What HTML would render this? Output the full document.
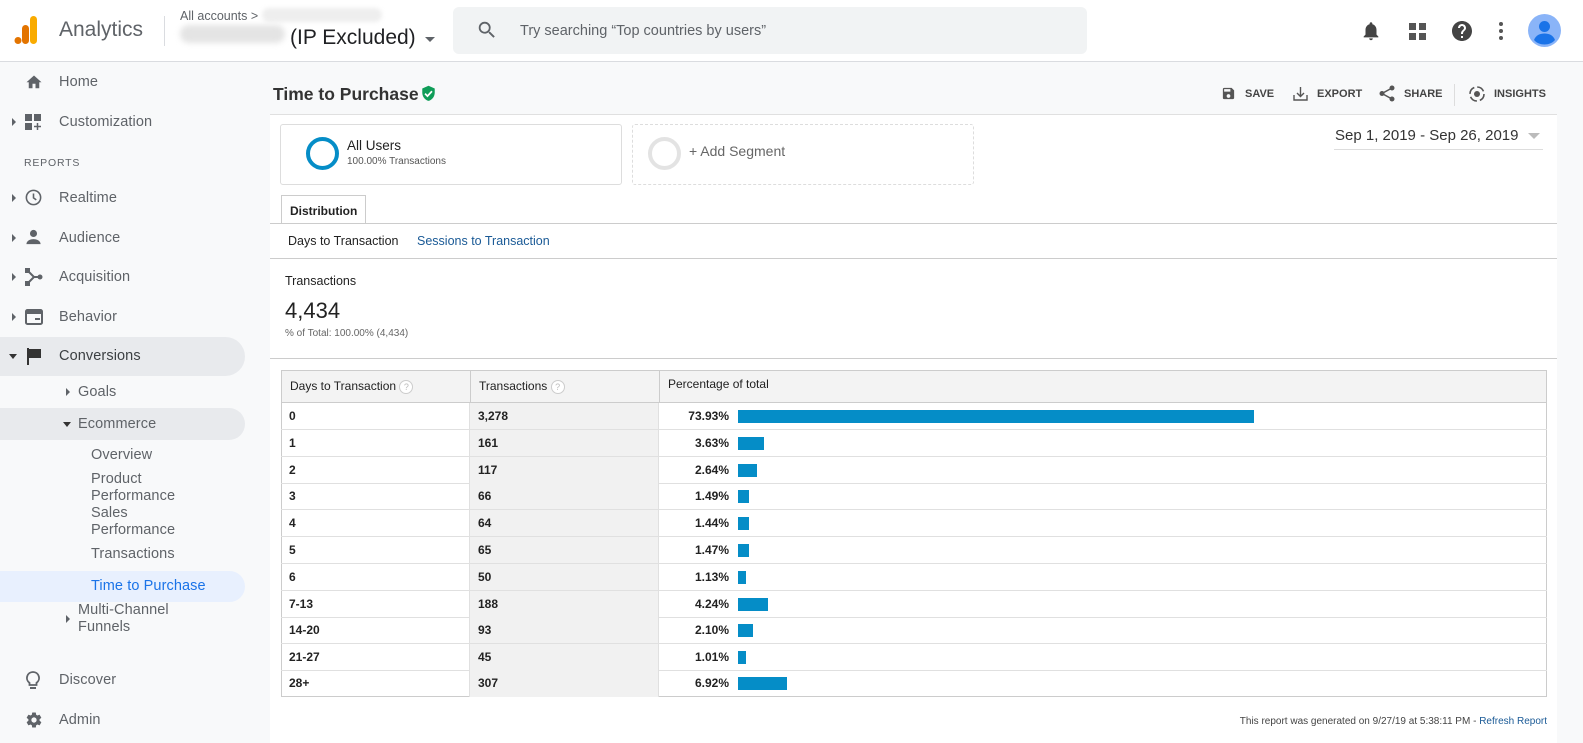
<!DOCTYPE html>
<html><head><meta charset="utf-8">
<style>
*{box-sizing:border-box;margin:0;padding:0}
body{width:1583px;height:743px;overflow:hidden;font-family:"Liberation Sans",Arial,sans-serif;background:#f8f9fa;position:relative;color:#222}
.a{position:absolute}
.top{left:0;top:0;width:1583px;height:62px;background:#fff;border-bottom:1px solid #dadce0}
.nav{font-size:14.5px;color:#5f6368;letter-spacing:.1px}
.tri{position:absolute;width:0;height:0;border-top:4px solid transparent;border-bottom:4px solid transparent;border-left:4px solid #5f6368}
.trid{position:absolute;width:0;height:0;border-left:4.5px solid transparent;border-right:4.5px solid transparent;border-top:5px solid #333}
.panel{left:270px;top:114px;width:1287px;height:629px;background:#fff}
.row{position:absolute;left:281px;width:1266px;height:27px;border-bottom:1px solid #e0e0e0;font-size:12px;font-weight:bold;color:#222}
.row div{position:absolute;top:0;height:100%;line-height:26px}
.c1{left:0;width:189px;padding-left:8px;border-right:1px solid #e0e0e0}
.c2{left:189px;width:189px;padding-left:8px;background:#f1f1f1;border-right:1px solid #e0e0e0}
.c3{left:378px;width:70px;text-align:right}
.bar{position:absolute;left:457px;top:7px!important;height:13px!important;background:#058dc7}
.ic{fill:#5f6368}
.q{display:inline-block;width:14px;height:14px;border:1px solid #ccc;border-radius:50%;font-size:9px;color:#bbb;text-align:center;line-height:12px;vertical-align:middle;background:#fff}
</style></head><body>
<div class="a top"></div>
<svg class="a" style="left:14px;top:15px" width="26" height="30" viewBox="0 0 26 30"><rect x="16" y="1" width="7" height="28" rx="3.5" fill="#f9ab00"/><rect x="8" y="10" width="7" height="19" rx="3.5" fill="#e37400"/><circle cx="4" cy="25.5" r="3.5" fill="#e37400"/></svg>
<div class="a" style="left:59px;top:18px;font-size:21px;color:#5f6368">Analytics</div>
<div class="a" style="left:164px;top:16px;width:1px;height:30px;background:#dadce0"></div>
<div class="a" style="left:180px;top:9px;font-size:12.5px;color:#5f6368">All accounts &gt;</div>
<div class="a" style="left:262px;top:8px;width:120px;height:14px;background:#eee;border-radius:7px;filter:blur(2px)"></div>
<div class="a" style="left:180px;top:25px;width:105px;height:18px;background:#e4e4e4;border-radius:9px;filter:blur(3px)"></div>
<div class="a" style="left:290px;top:26px;font-size:21px;color:#202124">(IP Excluded)</div>
<div class="a" style="left:425px;top:37px;width:0;height:0;border-left:5px solid transparent;border-right:5px solid transparent;border-top:5px solid #5f6368"></div>
<div class="a" style="left:453px;top:7px;width:634px;height:47px;background:#f1f3f4;border-radius:6px"></div>
<svg class="a" style="left:476px;top:19px" width="22" height="22" viewBox="0 0 24 24"><path fill="#5f6368" d="M15.5 14h-.79l-.28-.27A6.47 6.47 0 0016 9.5 6.5 6.5 0 109.5 16c1.61 0 3.090-.59 4.23-1.57l.27.28v.79l5 4.99L20.49 19l-4.99-5zm-6 0C7.01 14 5 11.990 5 9.5S7.01 5 9.5 5 14 7.01 14 9.5 11.99 14 9.5 14z"/></svg>
<div class="a" style="left:520px;top:23px;font-size:14.5px;color:#5f6368">Try searching “Top countries by users”</div>
<svg class="a" style="left:1360px;top:20px" width="22" height="22" viewBox="0 0 24 24"><path fill="#444" d="M12 22c1.1 0 2-.9 2-2h-4c0 1.1.9 2 2 2zm6-6v-5c0-3.07-1.64-5.64-4.5-6.32V4c0-.83-.67-1.5-1.5-1.5s-1.5.67-1.5 1.5v.68C7.63 5.36 6 7.92 6 11v5l-2 2v1h16v-1l-2-2z"/></svg>
<svg class="a" style="left:1409px;top:23px" width="17" height="17" viewBox="0 0 17 17"><rect x="0" y="0" width="7" height="7" fill="#555"/><rect x="10" y="0" width="7" height="7" fill="#555"/><rect x="0" y="10" width="7" height="7" fill="#555"/><rect x="10" y="10" width="7" height="7" fill="#555"/></svg>
<svg class="a" style="left:1450px;top:19px" width="24" height="24" viewBox="0 0 24 24"><path fill="#444" d="M12 2C6.48 2 2 6.48 2 12s4.48 10 10 10 10-4.48 10-10S17.52 2 12 2zm1 17h-2v-2h2v2zm2.07-7.75l-.9.92C13.45 12.9 13 13.5 13 15h-2v-.5c0-1.1.45-2.1 1.17-2.83l1.24-1.26c.37-.36.59-.86.59-1.41 0-1.1-.9-2-2-2s-2 .9-2 2H8c0-2.21 1.79-4 4-4s4 1.79 4 4c0 .88-.36 1.68-.93 2.25z"/></svg>
<svg class="a" style="left:1497px;top:21px" width="8" height="20" viewBox="0 0 8 20"><circle cx="4" cy="3" r="2" fill="#555"/><circle cx="4" cy="10" r="2" fill="#555"/><circle cx="4" cy="17" r="2" fill="#555"/></svg>
<svg class="a" style="left:1528px;top:14px" width="33" height="33" viewBox="0 0 33 33"><circle cx="16.5" cy="16.5" r="16.5" fill="#8ab4f8"/><circle cx="16.5" cy="12.5" r="5.5" fill="#1a73e8"/><path d="M6 26c2-5 6-6.5 10.5-6.5S25 21 27 26c-2.5 3-6.5 4.5-10.5 4.5S8.5 29 6 26z" fill="#1a73e8"/></svg>

<svg class="a" style="left:25px;top:73px" width="18" height="17" viewBox="0 0 24 22"><path class="ic" d="M10 20v-6h4v6h5v-8h3L12 3 2 12h3v8z"/></svg>
<div class="a nav" style="left:59px;top:74px">Home</div>
<div class="tri" style="left:12px;top:118px"></div>
<svg class="a" style="left:25px;top:114px" width="16" height="16" viewBox="0 0 16 16"><rect x="0" y="0" width="7" height="7" class="ic"/><rect x="9" y="0" width="7" height="7" class="ic"/><rect x="0" y="9" width="7" height="7" class="ic"/><path d="M12.5 9v7M9 12.5h7" stroke="#5f6368" stroke-width="1.5"/></svg>
<div class="a nav" style="left:59px;top:114px">Customization</div>
<div class="a" style="left:24px;top:157px;font-size:10.5px;color:#5f6368;letter-spacing:.8px">REPORTS</div>
<div class="tri" style="left:12px;top:194px"></div>
<svg class="a" style="left:24px;top:188px" width="19" height="19" viewBox="0 0 24 24"><circle cx="12" cy="12" r="9" fill="none" stroke="#5f6368" stroke-width="2"/><path d="M12 7v5.5l3.5 2.5" fill="none" stroke="#5f6368" stroke-width="2"/></svg>
<div class="a nav" style="left:59px;top:190px">Realtime</div>
<div class="tri" style="left:12px;top:234px"></div>
<svg class="a" style="left:25px;top:229px" width="17" height="16" viewBox="0 0 24 22"><circle cx="12" cy="6" r="5" class="ic"/><path class="ic" d="M2 21c0-5 6-7 10-7s10 2 10 7z"/></svg>
<div class="a nav" style="left:59px;top:230px">Audience</div>
<div class="tri" style="left:12px;top:273px"></div>
<svg class="a" style="left:25px;top:268px" width="18" height="18" viewBox="0 0 18 18"><rect x="0" y="0" width="5" height="5" class="ic"/><rect x="0" y="13" width="5" height="5" class="ic"/><circle cx="15" cy="9" r="2.5" class="ic"/><path d="M3 3l6 6-6 6M9 9h5" fill="none" stroke="#5f6368" stroke-width="2"/></svg>
<div class="a nav" style="left:59px;top:269px">Acquisition</div>
<div class="tri" style="left:12px;top:313px"></div>
<svg class="a" style="left:25px;top:309px" width="18" height="16" viewBox="0 0 18 16"><rect x="1" y="1" width="16" height="14" rx="1.5" fill="none" stroke="#5f6368" stroke-width="2"/><rect x="1" y="1" width="16" height="4" class="ic"/><path d="M10 10h5" stroke="#5f6368" stroke-width="2"/></svg>
<div class="a nav" style="left:59px;top:309px">Behavior</div>
<div class="a" style="left:0;top:337px;width:245px;height:39px;background:#e8eaed;border-radius:0 20px 20px 0"></div>
<div class="trid" style="left:9px;top:354px"></div>
<svg class="a" style="left:27px;top:348px" width="15" height="17" viewBox="0 0 15 17"><rect x="0" y="0" width="2" height="17" fill="#333"/><path d="M2 1h12v9H2z" fill="#333"/></svg>
<div class="a nav" style="left:59px;top:348px;color:#3c4043">Conversions</div>
<div class="tri" style="left:66px;top:388px"></div>
<div class="a nav" style="left:78px;top:384px">Goals</div>
<div class="a" style="left:0;top:408px;width:245px;height:32px;background:#e8eaed;border-radius:0 16px 16px 0"></div>
<div class="trid" style="left:63px;top:422px"></div>
<div class="a nav" style="left:78px;top:416px">Ecommerce</div>
<div class="a nav" style="left:91px;top:447px">Overview</div>
<div class="a nav" style="left:91px;top:471px;line-height:17px">Product<br>Performance<br>Sales<br>Performance</div>
<div class="a nav" style="left:91px;top:546px">Transactions</div>
<div class="a" style="left:0;top:571px;width:245px;height:31px;background:#e8f0fe;border-radius:0 16px 16px 0"></div>
<div class="a nav" style="left:91px;top:578px;color:#1a73e8">Time to Purchase</div>
<div class="tri" style="left:66px;top:615px"></div>
<div class="a nav" style="left:78px;top:602px;line-height:17px">Multi-Channel<br>Funnels</div>
<svg class="a" style="left:26px;top:671px" width="14" height="19" viewBox="0 0 14 19"><path d="M7 1a6 6 0 00-3.5 10.9V14h7v-2.1A6 6 0 007 1z" fill="none" stroke="#5f6368" stroke-width="1.8"/><rect x="4" y="16" width="6" height="2" class="ic"/></svg>
<div class="a nav" style="left:59px;top:672px">Discover</div>
<svg class="a" style="left:25px;top:711px" width="18" height="18" viewBox="0 0 24 24"><path class="ic" d="M19.4 13c.04-.32.06-.66.06-1s-.02-.68-.06-1l2.1-1.65c.2-.15.25-.42.12-.64l-2-3.46c-.12-.22-.39-.3-.61-.22l-2.490 1c-.52-.4-1.08-.73-1.69-.98l-.38-2.65A.49.49 0 0014 2h-4c-.25 0-.46.18-.49.42l-.38 2.65c-.61.25-1.17.59-1.69.98l-2.49-1a.5.5 0 00-.61.22l-2 3.46c-.13.22-.07.49.12.64L4.57 11c-.04.32-.07.66-.07 1s.03.68.07 1l-2.11 1.65c-.19.15-.24.42-.12.64l2 3.46c.12.22.39.3.61.22l2.49-1c.52.4 1.08.73 1.69.98l.38 2.65c.03.24.24.42.49.42h4c.25 0 .46-.18.49-.42l.38-2.65c.61-.25 1.17-.59 1.69-.98l2.49 1c.23.09.49 0 .61-.22l2-3.46c.12-.22.07-.49-.12-.64L19.4 13zM12 15.5c-1.93 0-3.5-1.57-3.5-3.5s1.57-3.5 3.5-3.5 3.5 1.57 3.5 3.5-1.57 3.5-3.5 3.5z"/></svg>
<div class="a nav" style="left:59px;top:712px">Admin</div>

<div class="a" style="left:273px;top:84px;font-size:17.5px;font-weight:bold;color:#333">Time to Purchase</div>
<svg class="a" style="left:420px;top:85px" width="17" height="18" viewBox="0 0 24 26"><path d="M12 1L3 5v6c0 5.5 3.8 10.7 9 12 5.2-1.3 9-6.5 9-12V5z" fill="#0f9d58"/><path d="M7 12.5l3.5 3.5 6.5-7" fill="none" stroke="#fff" stroke-width="2.5"/></svg>
<svg class="a" style="left:1221px;top:86px" width="15" height="15" viewBox="0 0 24 24"><path fill="#555" d="M17 3H5a2 2 0 00-2 2v14a2 2 0 002 2h14c1.1 0 2-.9 2-2V7l-4-4zm-5 16c-1.66 0-3-1.34-3-3s1.34-3 3-3 3 1.34 3 3-1.34 3-3 3zm3-10H5V5h10v4z"/></svg>
<div class="a" style="left:1245px;top:88px;font-size:11px;font-weight:bold;color:#444">SAVE</div>
<svg class="a" style="left:1293px;top:86px" width="15" height="15" viewBox="0 0 15 15"><path d="M1 9v5h13V9M7.5 1v9M4 7l3.5 3.5L11 7" fill="none" stroke="#555" stroke-width="1.4"/></svg>
<div class="a" style="left:1317px;top:88px;font-size:11px;font-weight:bold;color:#444">EXPORT</div>
<svg class="a" style="left:1379px;top:85px" width="16" height="17" viewBox="0 0 16 17"><circle cx="13" cy="3" r="2.5" fill="#555"/><circle cx="3" cy="8.5" r="2.5" fill="#555"/><circle cx="13" cy="14" r="2.5" fill="#555"/><path d="M13 3L3 8.5 13 14" fill="none" stroke="#555" stroke-width="1.5"/></svg>
<div class="a" style="left:1404px;top:88px;font-size:11px;font-weight:bold;color:#444">SHARE</div>
<div class="a" style="left:1454px;top:84px;width:1px;height:22px;background:#ddd"></div>
<svg class="a" style="left:1468px;top:85px" width="18" height="18" viewBox="0 0 18 18"><circle cx="9" cy="9" r="7" fill="none" stroke="#555" stroke-width="1.6" stroke-dasharray="8 3"/><circle cx="9" cy="9" r="3" fill="#555"/></svg>
<div class="a" style="left:1494px;top:88px;font-size:11px;font-weight:bold;color:#444">INSIGHTS</div>

<div class="a panel"></div>
<div class="a" style="left:270px;top:114px;width:1287px;height:1px;background:#e0e0e0"></div>
<div class="a" style="left:280px;top:124px;width:342px;height:61px;border:1px solid #ddd;border-radius:3px"></div>
<div class="a" style="left:306px;top:137px;width:33px;height:33px;border:4px solid #058dc7;border-radius:50%"></div>
<div class="a" style="left:347px;top:138px;font-size:13.5px;color:#222">All Users</div>
<div class="a" style="left:347px;top:156px;font-size:10px;color:#555">100.00% Transactions</div>
<div class="a" style="left:632px;top:124px;width:342px;height:61px;border:1px dashed #ddd;border-radius:3px"></div>
<div class="a" style="left:648px;top:137px;width:33px;height:33px;border:4px solid #e3e3e3;border-radius:50%"></div>
<div class="a" style="left:689px;top:143px;font-size:14px;color:#666">+ Add Segment</div>
<div class="a" style="left:1335px;top:127px;font-size:15px;color:#333">Sep 1, 2019 - Sep 26, 2019</div>
<div class="a" style="left:1528px;top:133px;width:0;height:0;border-left:6px solid transparent;border-right:6px solid transparent;border-top:6px solid #bbb"></div>
<div class="a" style="left:1334px;top:149px;width:209px;height:1px;background:#ddd"></div>
<div class="a" style="left:281px;top:195px;width:85px;height:29px;border:1px solid #ccc;border-bottom:none;background:#fff;font-size:12px;font-weight:bold;padding:8px 0 0 8px">Distribution</div>
<div class="a" style="left:270px;top:223px;width:1287px;height:1px;background:#ccc"></div>
<div class="a" style="left:288px;top:234px;font-size:12.5px;color:#222">Days to Transaction</div>
<div class="a" style="left:417px;top:234px;font-size:12.5px;color:#1a5a96">Sessions to Transaction</div>
<div class="a" style="left:270px;top:258px;width:1287px;height:1px;background:#ccc"></div>
<div class="a" style="left:285px;top:274px;font-size:12.5px;color:#222">Transactions</div>
<div class="a" style="left:285px;top:298px;font-size:22px;color:#222">4,434</div>
<div class="a" style="left:285px;top:328px;font-size:10px;color:#666">% of Total: 100.00% (4,434)</div>
<div class="a" style="left:270px;top:358px;width:1287px;height:1px;background:#ccc"></div>
<div class="a" style="left:281px;top:370px;width:1266px;height:327px;border:1px solid #ccc"></div>
<div class="row" style="top:370px;height:33px;background:#f3f3f3;font-weight:normal;border:1px solid #ccc">
 <div class="c1" style="line-height:31px;background:#f3f3f3;font-size:12px;border-right:1px solid #ccc">Days to Transaction <span class="q">?</span></div>
 <div class="c2" style="line-height:31px;background:#f3f3f3;font-size:12px;border-right:1px solid #ccc">Transactions <span class="q">?</span></div>
 <div style="left:386px;line-height:26px;font-size:12px">Percentage of total</div>
</div>
<div class="row" style="top:403px"><div class="c1">0</div><div class="c2">3,278</div><div class="c3">73.93%</div><div class="bar" style="width:516px"></div></div>
<div class="row" style="top:430px"><div class="c1">1</div><div class="c2">161</div><div class="c3">3.63%</div><div class="bar" style="width:26px"></div></div>
<div class="row" style="top:457px"><div class="c1">2</div><div class="c2">117</div><div class="c3">2.64%</div><div class="bar" style="width:19px"></div></div>
<div class="row" style="top:483px"><div class="c1">3</div><div class="c2">66</div><div class="c3">1.49%</div><div class="bar" style="width:11px"></div></div>
<div class="row" style="top:510px"><div class="c1">4</div><div class="c2">64</div><div class="c3">1.44%</div><div class="bar" style="width:11px"></div></div>
<div class="row" style="top:537px"><div class="c1">5</div><div class="c2">65</div><div class="c3">1.47%</div><div class="bar" style="width:11px"></div></div>
<div class="row" style="top:564px"><div class="c1">6</div><div class="c2">50</div><div class="c3">1.13%</div><div class="bar" style="width:8px"></div></div>
<div class="row" style="top:591px"><div class="c1">7-13</div><div class="c2">188</div><div class="c3">4.24%</div><div class="bar" style="width:30px"></div></div>
<div class="row" style="top:617px"><div class="c1">14-20</div><div class="c2">93</div><div class="c3">2.10%</div><div class="bar" style="width:15px"></div></div>
<div class="row" style="top:644px"><div class="c1">21-27</div><div class="c2">45</div><div class="c3">1.01%</div><div class="bar" style="width:8px"></div></div>
<div class="row" style="top:670px;border-bottom:none"><div class="c1">28+</div><div class="c2">307</div><div class="c3">6.92%</div><div class="bar" style="width:49px"></div></div>
<div class="a" style="left:1100px;top:716px;width:447px;text-align:right;font-size:10px;color:#444">This report was generated on 9/27/19 at 5:38:11 PM - <span style="color:#1a5a96">Refresh Report</span></div>
</body></html>
